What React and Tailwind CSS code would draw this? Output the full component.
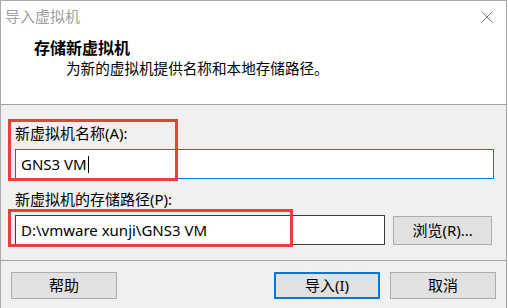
import React, { useState } from 'react';

const font = "font-['Noto_Sans','Noto_Sans_CJK_SC',sans-serif]";

const ImportVmDialog = () => {
  const [vmPath, setVmPath] = useState("D:\\vmware xunji\\GNS3 VM");
  const vmName = "GNS3 VM";

  return (
    <div className={`relative w-[507px] h-[308px] border-l border-t border-r border-[#a9a9a9] bg-[#f0f0f0] ${font} text-black overflow-hidden`}>
      {/* Title bar + header (white) */}
      <div className="bg-white border-b border-[#a0a0a0] h-[104px] flex flex-col">
        <div className="h-[31px] flex items-center justify-between pl-[4px] pr-[13px]">
          <span className="text-[15px] leading-none text-[#a0a0a0]">导入虚拟机</span>
          <svg width="12" height="12" viewBox="0 0 12 12" className="mt-[1px]">
            <path d="M0.5 0.5 L11.5 11.5 M11.5 0.5 L0.5 11.5" stroke="#7a7a7a" strokeWidth="1" fill="none" />
          </svg>
        </div>
        <div className="pl-[33px] pt-[6px] text-[16px] leading-[20px] font-bold">存储新虚拟机</div>
        <div className="pl-[65px] text-[14.6px] leading-[20px]">为新的虚拟机提供名称和本地存储路径。</div>
      </div>

      {/* Form body */}
      <div className="px-[14px] pt-[18px]">
        <label className="block text-[15px] leading-[20px]">新虚拟机名称(A):</label>
        {/* focused field with caret */}
        <div className="mt-[6px] flex items-center w-[479px] h-[30px] border border-[#0078d7] bg-white px-[5px] text-[15px]">
          <span>{vmName}</span>
          <span className="ml-[1px] w-px h-[17px] bg-black" />
        </div>
        <label className="block mt-[10px] text-[15px] leading-[20px]">新虚拟机的存储路径(P):</label>
        <div className="mt-[6px] flex items-center gap-[8px]">
          <input
            value={vmPath}
            onChange={(e) => setVmPath(e.target.value)}
            className={`block w-[371px] h-[30px] border border-[#3c3c3c] bg-white px-[5px] text-[15px] outline-none ${font}`}
          />
          <button className="w-[99px] h-[29px] bg-[#e1e1e1] border border-[#adadad] text-[15px] leading-none">浏览(R)...</button>
        </div>
      </div>

      {/* Footer */}
      <div className="mt-[15px] border-t border-[#a0a0a0] flex items-center px-[10px] pt-[11px]">
        <button className="w-[106px] h-[27px] bg-[#e1e1e1] border border-[#adadad] text-[15px] leading-none">帮助</button>
        <div className="flex-1" />
        <button className="w-[106px] h-[27px] bg-[#e1e1e1] border-2 border-[#0078d7] text-[15px] leading-none">导入(I)</button>
        <button className="ml-[10px] w-[106px] h-[27px] bg-[#e1e1e1] border border-[#adadad] text-[15px] leading-none">取消</button>
      </div>

      {/* Red annotation boxes */}
      <div className="absolute left-[7px] top-[118px] w-[170px] h-[62px] border-[3px] border-[#e8413c] pointer-events-none" />
      <div className="absolute left-[7px] top-[208px] w-[285px] h-[38px] border-[3px] border-[#e8413c] pointer-events-none" />
    </div>
  );
};

export default function App() {
  return <ImportVmDialog />;
}
